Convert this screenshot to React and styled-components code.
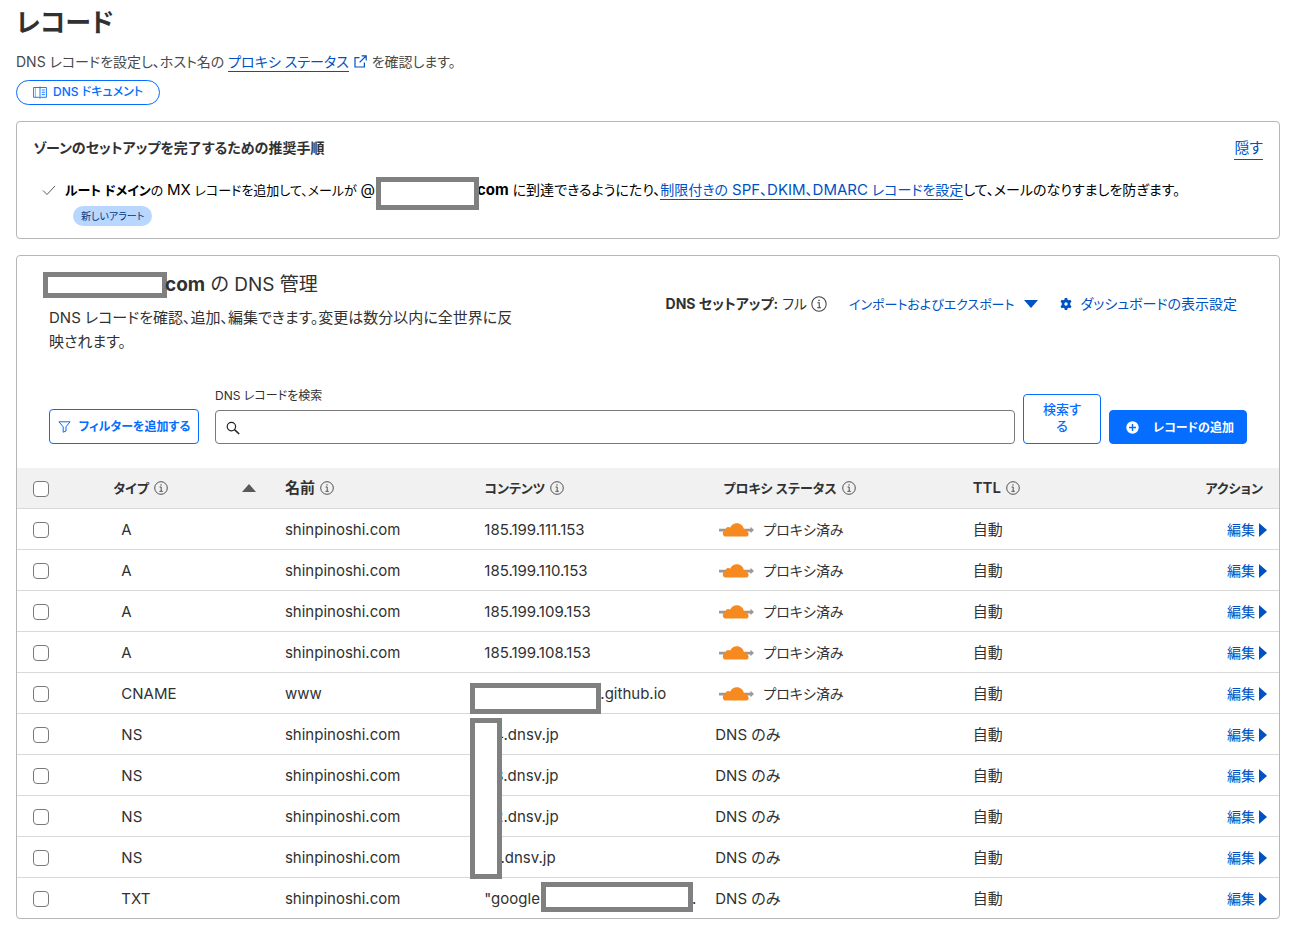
import React from 'react';
import styled, { createGlobalStyle, css } from 'styled-components';

const GlobalStyle = createGlobalStyle`
  *, *::before, *::after { box-sizing: border-box; }
  body {
    margin: 0;
    background: #fff;
    color: #313131;
    font-family: Inter, "Noto Sans CJK JP", sans-serif;
    font-size: 15px;
    line-height: 24px;
    font-feature-settings: "palt";
  }
  button, input { font: inherit; font-feature-settings: inherit; }
  svg { flex: none; }
`;

const Page = styled.main`
  padding: 5px 13px 6px 16px;
`;

const Title = styled.h1`
  margin: 0;
  font-size: 26px;
  line-height: 36px;
  font-weight: 600;
`;

const Lead = styled.p`
  margin: 9px 0 6px;
  font-size: 14px;
  color: #4a4a4a;
`;

const Link = styled.a`
  padding-bottom: 1px;
  color: #0051c3;
  text-decoration: none;
  border-bottom: 1px solid #0051c3;
`;

const HideLink = styled(Link)`
  padding: 0;
  font-size: 15px;
  line-height: 23px;
  align-self: flex-start;
`;

const ExternalIcon = styled.svg`
  width: 13px;
  height: 13px;
  margin: 0 5px;
  vertical-align: -1px;
  color: #0051c3;
`;

const DocsLink = styled.a`
  display: inline-flex;
  align-items: center;
  gap: 6px;
  height: 25px;
  padding: 0 16px 1px 16px;
  border: 1px solid #056dff;
  border-radius: 13px;
  color: #056dff;
  font-size: 12px;
  font-weight: 500;
  text-decoration: none;
  vertical-align: top;
`;

const Card = styled.section`
  margin-top: 16px;
  border: 1px solid #b6b6b6;
  border-radius: 4px;
  ${(p) => p.$padded && css`padding: 14px 16px 12px;`}
`;

const CardHead = styled.div`
  display: flex;
  justify-content: space-between;
`;

const CardTitle = styled.h2`
  margin: 0;
  font-size: 14px;
  line-height: 24px;
  font-weight: 600;
`;

const Step = styled.div`
  display: flex;
  margin-top: 18px;
  padding-left: 9px;
  gap: 9px;
  color: #000;
  font-size: 14px;
`;

const StepIcon = styled.svg`
  width: 14px;
  height: 24px;
  color: #595959;
`;

const StepLead = styled.span`
  font-size: 13px;
`;

const Latin = styled.span`
  font-size: 15px;
`;

const Badge = styled.span`
  display: block;
  width: fit-content;
  margin: 4px 0 0 8px;
  padding: 0 8px;
  border-radius: 10px;
  background: #b9d6ff;
  color: #003682;
  font-size: 10px;
  line-height: 20px;
`;

const Redaction = styled.span`
  display: inline-block;
  width: ${(p) => p.$w}px;
  height: ${(p) => p.$h}px;
  border: 5px solid #808080;
  background: #fff;
  vertical-align: middle;
`;

const StepRedaction = styled(Redaction)`
  position: relative;
  margin: -6px -2px -10px 1px;
`;

const TitleRedaction = styled(Redaction)`
  margin: -6px -2px -4px -6px;
`;

const ZoneHead = styled.div`
  display: flex;
  justify-content: space-between;
  padding: 17px 42px 0 32px;
`;

const ZoneTitle = styled.h2`
  margin: 0;
  font-size: 19px;
  line-height: 24px;
  font-weight: 400;
`;

const ZoneText = styled.p`
  width: 474px;
  margin: 9px 0 0;
  font-size: 15px;
`;

const ZoneActions = styled.div`
  display: flex;
  align-items: center;
  align-self: flex-start;
  height: 24px;
  margin-top: 19px;
  font-size: 14px;
  white-space: nowrap;
`;

const Setup = styled.span`
  display: flex;
  align-items: center;
  gap: 4px;
  margin-right: 22px;
`;

const TextButton = styled.button`
  display: flex;
  align-items: center;
  gap: 9px;
  margin: 0 ${(p) => p.$end || 0}px 0 0;
  padding: 0;
  border: 0;
  background: none;
  color: #0051c3;
  font-size: ${(p) => (p.$compact ? 13 : 14)}px;
`;

const Toolbar = styled.form`
  display: flex;
  align-items: flex-end;
  gap: 8px;
  padding: 30px 32px 24px;
`;

const Button = styled.button`
  display: flex;
  align-items: center;
  justify-content: center;
  gap: 8px;
  height: 34px;
  padding: 0 6px;
  flex: none;
  border: 1px solid #056dff;
  border-radius: 4px;
  font-size: 12px;
  font-weight: 600;
  line-height: 17px;
  white-space: nowrap;
  background: ${(p) => (p.$primary ? '#056dff' : '#fff')};
  color: ${(p) => (p.$primary ? '#fff' : '#056dff')};
`;

const FilterButton = styled(Button)`
  width: 150px;
  height: 35px;
  margin-right: 8px;
`;

const SearchButton = styled(Button)`
  width: 78px;
  height: 50px;
  padding: 0 18px 2px;
  font-size: 13px;
  font-weight: 500;
  white-space: normal;
`;

const AddButton = styled(Button)`
  width: 138px;
  padding: 0 6px 0 10px;
  gap: 14px;
`;

const SearchField = styled.div`
  flex: 1;
`;

const SearchLabel = styled.label`
  display: block;
  margin-bottom: 2px;
  font-size: 12px;
`;

const SearchBox = styled.div`
  display: flex;
  align-items: center;
  height: 34px;
  padding: 2px 10px 0;
  border: 1px solid #797979;
  border-radius: 4px;

  input {
    flex: 1;
    min-width: 0;
    margin-left: 8px;
    border: 0;
    outline: 0;
    background: none;
  }
`;

const Table = styled.table`
  width: 100%;
  table-layout: fixed;
  border-collapse: collapse;
`;

const Th = styled.th`
  height: 40px;
  padding: 0 ${(p) => p.$end || 0}px 0 ${(p) => p.$start || 8}px;
  width: ${(p) => p.$width || 'auto'};
  background: #f1f1f1;
  font-size: ${(p) => (p.$large ? 15 : 13)}px;
  font-weight: 600;
  text-align: ${(p) => (p.$right ? 'right' : 'left')};
  white-space: nowrap;
`;

const HeadLabel = styled.span`
  display: flex;
  align-items: center;
  gap: 5px;
`;

const SortIcon = styled.svg`
  width: 14px;
  height: 8px;
  margin: 0 21px 0 auto;
  color: #595959;
`;

const Row = styled.tr`
  border-top: 1px solid #d9d9d9;
`;

const Td = styled.td`
  position: relative;
  height: 41px;
  padding: 2px ${(p) => p.$end || 0}px 0 ${(p) => p.$start || 8}px;
  text-align: ${(p) => (p.$right ? 'right' : 'left')};
  white-space: nowrap;
`;

const Checkbox = styled.input.attrs({ type: 'checkbox' })`
  display: block;
  appearance: none;
  width: 16px;
  height: 16px;
  margin: ${(p) => (p.$head ? 2 : 0)}px 0 0;
  border: 1px solid #797979;
  border-radius: 4px;
  background: #fff;
`;

const Proxied = styled.span`
  display: flex;
  align-items: center;
  gap: 9px;
  padding-left: 4px;
  font-size: 14px;
`;

const EditButton = styled.button`
  display: inline-flex;
  align-items: center;
  gap: 4px;
  padding: 0;
  border: 0;
  background: none;
  color: #0051c3;
  font-size: 14px;
`;

// covers part of a cell, may run over several rows
const CellMask = styled.span`
  position: absolute;
  z-index: 1;
  top: ${(p) => p.$top}px;
  left: ${(p) => p.$left}px;
  width: ${(p) => p.$w}px;
  height: ${(p) => p.$h}px;
  border: 5px solid #808080;
  background: #fff;
`;

const Tail = styled.span`
  margin-left: 152px;
`;

const InfoIcon = ({ size = 14 }) => (
  <svg width={size} height={size} viewBox="0 0 14 14" fill="none" stroke="#404040">
    <circle cx="7" cy="7" r="6.3" strokeWidth="0.9" />
    <path d="M5.6 6H7.2V10.2M5.4 10.3H8.8" strokeWidth="0.9" />
    <circle cx="7" cy="3.9" r="0.7" fill="#404040" stroke="none" />
  </svg>
);

const BookIcon = () => (
  <svg width="14" height="13" viewBox="0 0 14 13" fill="none" stroke="currentColor" strokeWidth="0.9">
    <path d="M7 1.5H.6V11.3H5.8L7 12.2 8.2 11.3H13.4V1.5H7V12M7 1.5V.6M8.8 4H11.8M8.8 6.3H11.8M8.8 8.6H11.8" />
    <path d="M2.5 1.5V11" strokeOpacity="0.5" />
  </svg>
);

const FilterIcon = () => (
  <svg width="13" height="12" viewBox="0 0 13 12" fill="none" stroke="currentColor">
    <path d="M.9.8H12.1L8 5.8V10L5.2 11.2V5.8Z" />
  </svg>
);

const SearchIcon = () => (
  <svg width="14" height="14" viewBox="0 0 14 14" fill="none" stroke="#222">
    <circle cx="5.4" cy="5.6" r="4.2" strokeWidth="1.2" />
    <path d="M8.5 8.6L13.2 13" strokeWidth="1.5" />
  </svg>
);

const GearIcon = () => (
  <svg width="12" height="12" viewBox="0 0 12 12" fill="currentColor" fillRule="evenodd">
    <path d="M4.8 0h2.4l.4 1.7 1 .6 1.7-.6 1.2 2.1L10.2 5v2l1.3 1.2-1.2 2.1-1.7-.6-1 .6L7.2 12H4.8l-.4-1.7-1-.6-1.7.6L.5 8.2 1.8 7V5L.5 3.8l1.2-2.1 1.7.6 1-.6zM6 4.3a1.7 1.7 0 1 0 0 3.4 1.7 1.7 0 0 0 0-3.4z" />
  </svg>
);

const PlusIcon = () => (
  <svg width="13" height="13" viewBox="0 0 13 13">
    <circle cx="6.5" cy="6.5" r="6.2" fill="#fff" />
    <path d="M6.5 3V10M3 6.5H10" stroke="#056dff" strokeWidth="1.4" />
  </svg>
);

const CloudIcon = () => (
  <svg width="35" height="14" viewBox="0 0 35 14">
    <path d="M0 5.7H31.5V3.8L35 7.1 31.5 10.3V8.4H0Z" fill="#999" />
    <path
      d="M7.2 13.6A3.4 3.4 0 0 1 3.8 10.2C3.8 8.5 5 7.2 6.5 6.9 6.4 5.2 7.8 4 9.3 4.1 10 4.1 10.6 4.4 11.1 4.8 12 2 14.8.2 17.8.2 21.4.2 24.3 2.7 24.9 6.1 27 5.7 28.4 7 28.5 8.7 29.2 9.2 29.6 10.1 29.6 10.9 29.6 12.5 28.4 13.6 26.8 13.6Z"
      fill="#f6891f"
    />
  </svg>
);

const ARROWS = {
  down: { w: 14, h: 8, d: 'M0 0H14L7 8Z' },
  right: { w: 8, h: 14, d: 'M0 0L8 7 0 14Z' },
};

const Arrow = ({ to }) => {
  const { w, h, d } = ARROWS[to];
  return (
    <svg width={w} height={h} viewBox={`0 0 ${w} ${h}`} fill="currentColor">
      <path d={d} />
    </svg>
  );
};

const host = 'shinpinoshi.com';

const records = [
  { type: 'A', name: host, content: '185.199.111.153', proxied: true },
  { type: 'A', name: host, content: '185.199.110.153', proxied: true },
  { type: 'A', name: host, content: '185.199.109.153', proxied: true },
  { type: 'A', name: host, content: '185.199.108.153', proxied: true },
  {
    type: 'CNAME', name: 'www', content: '.github.io', proxied: true, start: 124, mask: { $top: 10, $left: -6, $w: 131, $h: 31 },
  },
  {
    type: 'NS', name: host, content: '4.dnsv.jp', start: 18, mask: { $top: 4, $left: -6, $w: 32, $h: 161 },
  },
  { type: 'NS', name: host, content: '3.dnsv.jp', start: 18 },
  { type: 'NS', name: host, content: '2.dnsv.jp', start: 18 },
  { type: 'NS', name: host, content: '1.dnsv.jp', start: 18 },
  {
    type: 'TXT', name: host, content: '"google', tail: '.', mask: { $top: 4, $left: 65, $w: 152, $h: 30 },
  },
];

const RecordRow = ({ record }) => {
  const {
    type, name, content, proxied, start, mask, tail,
  } = record;

  return (
    <Row>
      <Td $start={16}><Checkbox aria-label={`${type} ${content}`} /></Td>
      <Td $start={16}>{type}</Td>
      <Td>{name}</Td>
      <Td $start={start}>
        {content}
        {tail && <Tail>{tail}</Tail>}
        {mask && <CellMask {...mask} />}
      </Td>
      <Td>{proxied ? <Proxied><CloudIcon />プロキシ済み</Proxied> : 'DNS のみ'}</Td>
      <Td>自動</Td>
      <Td $right $end={12}>
        <EditButton type="button">編集<Arrow to="right" /></EditButton>
      </Td>
    </Row>
  );
};

const App = () => (
  <>
    <GlobalStyle />
    <Page>
      <Title>レコード</Title>
      <Lead>
        DNS レコードを設定し、ホスト名の <Link href="#proxy">プロキシ ステータス</Link>
        <ExternalIcon viewBox="0 0 13 13" fill="none" stroke="currentColor" strokeWidth="1.2">
          <path d="M5.5 2.6H1V12H10.4V7.5M7.6.8H12.2V5.4M12 1L5.6 7.4" />
        </ExternalIcon>
        を確認します。
      </Lead>
      <DocsLink href="#docs"><BookIcon />DNS ドキュメント</DocsLink>

      <Card $padded>
        <CardHead>
          <CardTitle>ゾーンのセットアップを完了するための推奨手順</CardTitle>
          <HideLink href="#hide">隠す</HideLink>
        </CardHead>
        <Step>
          <StepIcon viewBox="0 0 14 24" fill="none" stroke="currentColor">
            <path d="M1 12.5L5 16.5 13 8" />
          </StepIcon>
          <div>
            <StepLead>
              <b>ルート ドメイン</b>の <Latin>MX</Latin> レコードを追加して、メールが <Latin>@</Latin>
            </StepLead>
            <StepRedaction $w={103} $h={33} />
            <Latin as="b">com</Latin> に到達できるようにたり、
            <Link href="#spf">制限付きの <Latin>SPF</Latin>、<Latin>DKIM</Latin>、<Latin>DMARC</Latin> レコードを設定</Link>
            して、メールのなりすましを防ぎます。
            <Badge>新しいアラート</Badge>
          </div>
        </Step>
      </Card>

      <Card>
        <ZoneHead>
          <div>
            <ZoneTitle><TitleRedaction $w={124} $h={26} /><b>com</b> の DNS 管理</ZoneTitle>
            <ZoneText>DNS レコードを確認、追加、編集できます。変更は数分以内に全世界に反映されます。</ZoneText>
          </div>
          <ZoneActions>
            <Setup><span><b>DNS セットアップ:</b> フル</span><InfoIcon size={16} /></Setup>
            <TextButton type="button" $compact $end={22}>インポートおよびエクスポート<Arrow to="down" /></TextButton>
            <TextButton type="button"><GearIcon />ダッシュボードの表示設定</TextButton>
          </ZoneActions>
        </ZoneHead>

        <Toolbar onSubmit={(e) => e.preventDefault()}>
          <FilterButton type="button"><FilterIcon />フィルターを追加する</FilterButton>
          <SearchField>
            <SearchLabel htmlFor="record-search">DNS レコードを検索</SearchLabel>
            <SearchBox>
              <SearchIcon />
              <input id="record-search" type="text" />
            </SearchBox>
          </SearchField>
          <SearchButton type="submit">検索する</SearchButton>
          <AddButton type="button" $primary><PlusIcon />レコードの追加</AddButton>
        </Toolbar>

        <Table>
          <thead>
            <tr>
              <Th $width="7%" $start={16}><Checkbox $head aria-label="すべて選択" /></Th>
              <Th $width="13.6%">
                <HeadLabel>
                  タイプ<InfoIcon />
                  <SortIcon viewBox="0 0 14 8" fill="currentColor"><path d="M7 0L14 8H0Z" /></SortIcon>
                </HeadLabel>
              </Th>
              <Th $width="15.8%" $large><HeadLabel>名前<InfoIcon /></HeadLabel></Th>
              <Th $width="18.3%"><HeadLabel>コンテンツ<InfoIcon /></HeadLabel></Th>
              <Th $width="20.4%" $start={16}><HeadLabel>プロキシ ステータス<InfoIcon /></HeadLabel></Th>
              <Th $large><HeadLabel>TTL<InfoIcon /></HeadLabel></Th>
              <Th $right $end={16}>アクション</Th>
            </tr>
          </thead>
          <tbody>
            {records.map((record) => (
              <RecordRow key={`${record.type}-${record.content}`} record={record} />
            ))}
          </tbody>
        </Table>
      </Card>
    </Page>
  </>
);

export default App;
